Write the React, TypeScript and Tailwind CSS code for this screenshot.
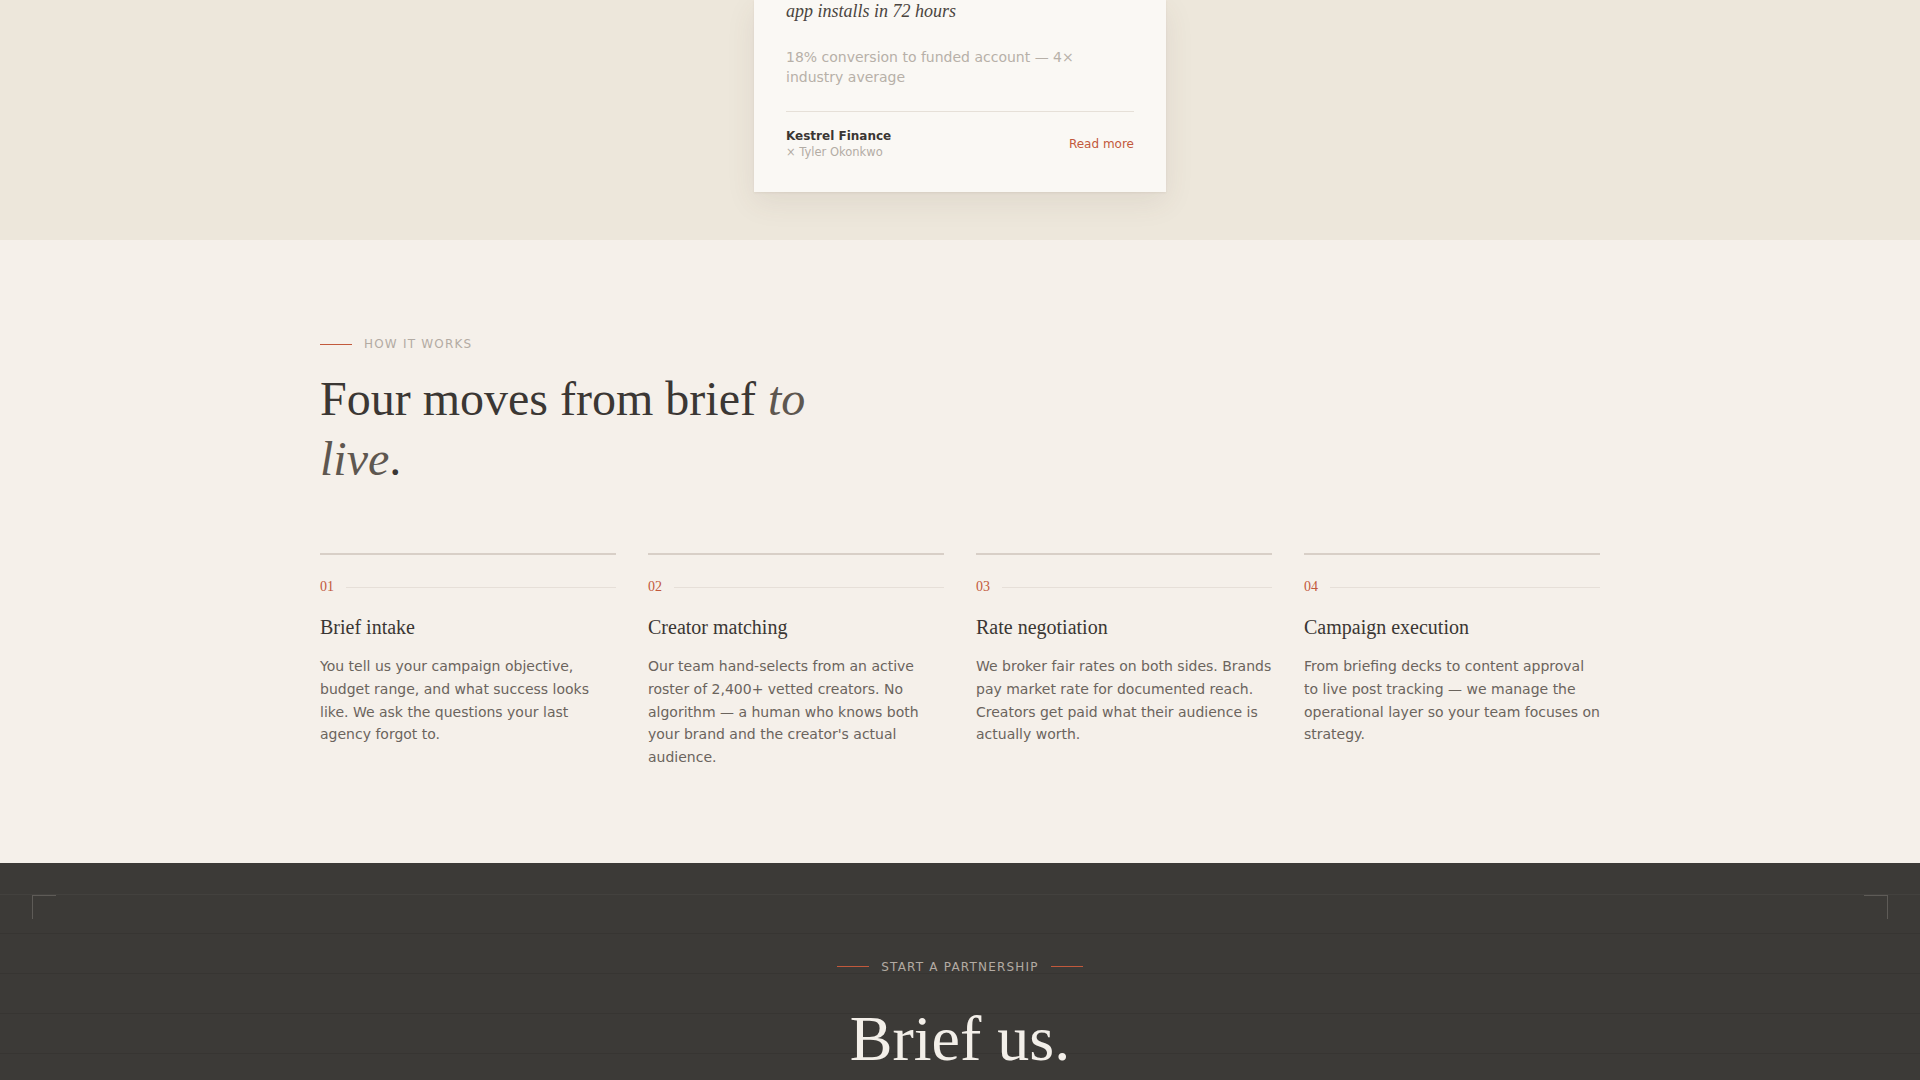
import React from "react";

const serif = { fontFamily: '"Liberation Serif", "Times New Roman", serif' };

type Step = { n: string; title: string; body: string };

const steps: Step[] = [
  {
    n: "01",
    title: "Brief intake",
    body: "You tell us your campaign objective, budget range, and what success looks like. We ask the questions your last agency forgot to.",
  },
  {
    n: "02",
    title: "Creator matching",
    body: "Our team hand-selects from an active roster of 2,400+ vetted creators. No algorithm — a human who knows both your brand and the creator's actual audience.",
  },
  {
    n: "03",
    title: "Rate negotiation",
    body: "We broker fair rates on both sides. Brands pay market rate for documented reach. Creators get paid what their audience is actually worth.",
  },
  {
    n: "04",
    title: "Campaign execution",
    body: "From briefing decks to content approval to live post tracking — we manage the operational layer so your team focuses on strategy.",
  },
];

function CaseCard() {
  return (
    <article className="flex w-[412px] flex-col bg-[#faf8f4] px-8 pb-8 shadow-[0_1px_2px_rgba(90,70,50,0.08),0_10px_28px_rgba(90,70,50,0.09)]">
      <p style={serif} className="mt-[-1px] text-[18px] italic leading-6 text-[#4a4540]">
        app installs in 72 hours
      </p>
      <p className="mt-6 text-[14px] leading-5 text-[#b7b0a8]">
        18% conversion to funded account — 4× industry average
      </p>
      <div className="mt-6 flex items-center justify-between border-t border-[#e6e0d8] pt-4">
        <div>
          <div className="text-[12px] font-bold leading-4 text-[#3a3633]">Kestrel Finance</div>
          <div className="text-[11.5px] leading-4 text-[#b3aca4]">× Tyler Okonkwo</div>
        </div>
        <a className="text-[12px] leading-4 text-[#c2593c]" href="#">
          Read more
        </a>
      </div>
    </article>
  );
}

function StepColumn({ step }: { step: Step }) {
  return (
    <div className="border-t-2 border-[#d8cfc7] pt-6">
      <div className="mb-[18px] flex items-center gap-3">
        <span style={serif} className="text-[14px] leading-4 text-[#c2593c]">
          {step.n}
        </span>
        <span className="h-px flex-1 bg-[#e6dfd8]" />
      </div>
      <h3 style={serif} className="mb-[14px] text-[20px] leading-7 text-[#3a3633]">
        {step.title}
      </h3>
      <p className="text-[14px] leading-[1.625] text-[#6b645d]">{step.body}</p>
    </div>
  );
}

export default function App() {
  return (
    <div
      className="min-h-screen bg-[#f5f0ea]"
      style={{ fontFamily: '"DejaVu Sans", "Liberation Sans", sans-serif' }}
    >
      {/* case study strip */}
      <section className="flex justify-center bg-[#ede7db] pb-12">
        <CaseCard />
      </section>

      {/* how it works */}
      <section className="pb-[94px] pt-24">
        <div className="mx-auto max-w-[1280px]">
          <div className="mb-[17px] flex items-center gap-3">
            <span className="h-px w-8 bg-[#c2593c]" />
            <span className="text-[12px] uppercase leading-4 tracking-[0.1em] text-[#b3aba3]">
              How it works
            </span>
          </div>
          <h2 style={serif} className="max-w-[540px] text-[48px] leading-[1.25] text-[#3b3734]">
            Four moves from brief <em className="text-[#5e5750]">to live</em>.
          </h2>
          <div className="mt-16 grid grid-cols-4 gap-8">
            {steps.map((s) => (
              <StepColumn key={s.n} step={s} />
            ))}
          </div>
        </div>
      </section>

      {/* partnership call to action */}
      <section className="relative overflow-hidden bg-[#3c3a37] pb-24 pt-24">
        <div className="pointer-events-none absolute inset-x-0 top-[31px] h-px bg-[#43413e]" />
        <div className="pointer-events-none absolute inset-x-0 top-[70px] bottom-0 bg-[image:repeating-linear-gradient(180deg,#373532_0px,#373532_1px,transparent_1px,transparent_40px)]" />
        <span className="pointer-events-none absolute left-8 top-8 h-6 w-6 border-l border-t border-[#5e5b57]" />
        <span className="pointer-events-none absolute right-8 top-8 h-6 w-6 border-r border-t border-[#5e5b57]" />

        <div className="relative flex flex-col items-center">
          <div className="mb-[29px] flex items-center gap-3">
            <span className="h-px w-8 bg-[#c2593c]" />
            <span className="text-[12px] uppercase leading-4 tracking-[0.1em] text-[#b3aba3]">
              Start a partnership
            </span>
            <span className="h-px w-8 bg-[#c2593c]" />
          </div>
          <h2 style={serif} className="text-[64px] leading-[1.1] text-[#f3efe9]">
            Brief us.
          </h2>
        </div>
      </section>
    </div>
  );
}
